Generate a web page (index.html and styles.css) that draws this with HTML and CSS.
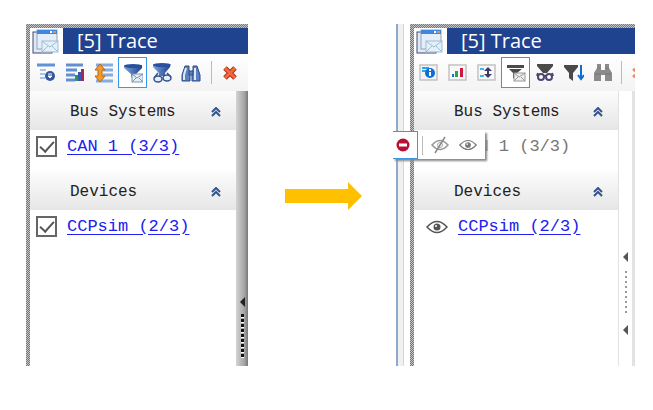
FILE: index.html
```html
<!DOCTYPE html>
<html lang="en">
<head>
    <meta charset="UTF-8">
    <meta name="viewport" content="width=device-width, initial-scale=1.0">
    <title>Trace</title>
    <link rel="stylesheet" href="styles.css">
</head>
<body>
    <svg class="defs" width="0" height="0" aria-hidden="true">
        <defs>
            <linearGradient id="blueGrad" x1="0" y1="0" x2="1" y2="0">
                <stop offset="0" stop-color="#7da4dc"/>
                <stop offset="1" stop-color="#1f438f"/>
            </linearGradient>
            <symbol id="window" viewBox="0 0 27 25">
                <rect x="1" y="3" width="19" height="21" fill="#dfe9f5" stroke="#3c4a70"/>
                <rect x="5" y="1" width="20" height="19" fill="#e3eefa" stroke="#8fa3bd"/>
                <rect x="5" y="1" width="20" height="4" fill="#3f86dc"/>
                <rect x="18" y="2" width="2" height="2" fill="#fff"/>
                <rect x="21" y="2" width="3" height="2" fill="#f08a4a"/>
                <rect x="10" y="12" width="16" height="11" fill="#e2f0fa" stroke="#a4bccd"/>
                <path d="M10 12l8 6 8-6M10 23l6-6M26 23l-6-6" fill="none" stroke="#a4bccd"/>
            </symbol>
            <symbol id="collapse" viewBox="0 0 10 10">
                <path d="M1 5l4-4 4 4M1 9l4-4 4 4" fill="none" stroke="#2f5590" stroke-width="2"/>
            </symbol>
            <symbol id="eye" viewBox="0 0 22 14">
                <path d="M1 7Q11-4 21 7Q11 18 1 7Z" fill="#fff" stroke="currentColor" stroke-width="1.5"/>
                <circle cx="11" cy="7" r="3.5" fill="currentColor"/>
                <circle cx="10" cy="6" r="1" fill="#fff"/>
            </symbol>
        </defs>
    </svg>

    <main class="compare">
        <section class="panel">
            <header class="titlebar">
                <svg class="app-icon"><use href="#window"/></svg>
                <h2>[5] Trace</h2>
            </header>
            <div class="toolbar">
                <button aria-label="Details">
                    <svg viewBox="0 0 20 20"><path d="M1 2h18" stroke="#5f92d6" stroke-width="3"/><path d="M4 7h6M4 11h5M4 15h5" stroke="#a9c4e8" stroke-width="2"/><circle cx="14" cy="13" r="5" fill="#35579f"/><path d="M12 13h4l-2 2zM12 11h4" fill="#fff" stroke="#fff"/></svg>
                </button>
                <button aria-label="Statistics">
                    <svg viewBox="0 0 20 20"><path d="M1 2h17M1 7h11M1 12h9M1 17h9" stroke="#638fd0" stroke-width="3"/><path d="M10 12h3v6h-3z" fill="#2e9a43"/><path d="M13 9h3v9h-3z" fill="#3458b4"/><path d="M16 6h3v12h-3z" fill="#a72654"/></svg>
                </button>
                <button aria-label="Expand rows">
                    <svg viewBox="0 0 20 20"><path d="M2 2h17M9 7h10M9 12h10M2 18h17" stroke="#86ace0" stroke-width="3"/><path d="M6 1l5 6H8v6h3l-5 6-5-6h3V7H1z" fill="#f59b28" stroke="#b8641a"/></svg>
                </button>
                <button class="active" aria-label="Message filter">
                    <svg viewBox="0 0 20 20"><path d="M1 2h18v3l-6 6v6l-5-3v-3L1 5z" fill="url(#blueGrad)"/><ellipse cx="10" cy="3" rx="9" ry="2" fill="#29509f"/><rect x="9" y="11" width="11" height="8" fill="#e6eff7" stroke="#7b93ae"/><path d="M9 11l5 4 6-4M9 19l4-4M20 19l-4-4" fill="none" stroke="#7b93ae"/></svg>
                </button>
                <button aria-label="View filter">
                    <svg viewBox="0 0 20 20"><path d="M1 1h17v3l-5 6v3H7v-3L1 4z" fill="url(#blueGrad)"/><ellipse cx="10" cy="2" rx="9" ry="2" fill="#29509f"/><g fill="#e6eefa" stroke="#345491" stroke-width="1.5"><ellipse cx="6" cy="16" rx="4" ry="3"/><ellipse cx="15" cy="15" rx="4" ry="3"/><path d="M2 15l4-5M19 14l-4-4" fill="none"/></g></svg>
                </button>
                <button aria-label="Find">
                    <svg viewBox="0 0 20 20"><g fill="#5b82c0" stroke="#2c4a86"><path d="M4 3h4v4l1 3v8H1v-6z"/><path d="M12 3h4l3 9v6h-8v-8l1-3z"/><path d="M8 8h4v4H8z"/></g><path d="M5 5l-2 7v5M14 5v12" stroke="#dce8f8" fill="none" stroke-width="2"/></svg>
                </button>
                <span class="divider"></span>
                <button aria-label="Clear">
                    <svg viewBox="0 0 20 20"><path d="M5 5l10 10M15 5L5 15" stroke="#a8321a" stroke-width="5"/><path d="M5 5l10 10M15 5L5 15" stroke="#f26a3c" stroke-width="3"/></svg>
                </button>
            </div>
            <div class="content">
                <div class="groups">
                    <div class="group-title">
                        <h3>Bus Systems</h3>
                        <button class="collapse" aria-label="Collapse Bus Systems"><svg><use href="#collapse"/></svg></button>
                    </div>
                    <div class="item">
                        <input type="checkbox" aria-label="CAN 1" checked>
                        <a href="#can">CAN 1 (3/3)</a>
                    </div>
                    <div class="group-title">
                        <h3>Devices</h3>
                        <button class="collapse" aria-label="Collapse Devices"><svg><use href="#collapse"/></svg></button>
                    </div>
                    <div class="item">
                        <input type="checkbox" aria-label="CCPsim" checked>
                        <a href="#ccpsim">CCPsim (2/3)</a>
                    </div>
                </div>
                <div class="splitter">
                    <span class="arrow"></span>
                    <span class="grip"></span>
                </div>
            </div>
        </section>

        <div class="becomes">
            <svg viewBox="0 0 77 28"><path d="M0 7h63V0l14 14-14 14v-7H0z" fill="#ffc000"/></svg>
        </div>

        <div class="docked">
            <div class="edge"></div>
            <section class="panel new">
                <header class="titlebar">
                    <svg class="app-icon"><use href="#window"/></svg>
                    <h2>[5] Trace</h2>
                </header>
                <div class="toolbar">
                    <button aria-label="Details">
                        <svg viewBox="0 0 20 20"><rect x="1" y="2" width="17" height="15" fill="#f4f4f4" stroke="#c2c2c2" stroke-width="1.5"/><path d="M3 5h7M3 8h4" stroke="#2ba5ee" stroke-width="2"/><circle cx="11" cy="10" r="5" fill="#0b6fd3"/><path d="M11 9v4M11 6v2" stroke="#fff" stroke-width="2"/></svg>
                    </button>
                    <button aria-label="Statistics">
                        <svg viewBox="0 0 20 20"><rect x="1" y="2" width="17" height="15" fill="#f8f8f8" stroke="#c2c2c2" stroke-width="1.5"/><path d="M4 11h2v3H4z" fill="#1672c4"/><path d="M7 8h3v6H7z" fill="#21a84a"/><path d="M12 5h3v9h-3z" fill="#cf1744"/></svg>
                    </button>
                    <button aria-label="Expand rows">
                        <svg viewBox="0 0 20 20"><rect x="1" y="2" width="17" height="15" fill="#f8f8f8" stroke="#c2c2c2" stroke-width="1.5"/><path d="M3 6h4M3 13h4" stroke="#43b3f0" stroke-width="2"/><path d="M11 4l4 4h-3v3h3l-4 4-4-4h3V8H7z" fill="#3b3b68"/></svg>
                    </button>
                    <button class="active" aria-label="Message filter">
                        <svg viewBox="0 0 20 20"><path d="M1 2h17v3H1zM3 6h13l-5 4v7l-4-2v-5z" fill="#4a4a4a"/><rect x="8" y="10" width="11" height="8" fill="#eee" stroke="#999"/><path d="M8 10l5 4 6-4M8 18l4-4M19 18l-4-4" fill="none" stroke="#999"/></svg>
                    </button>
                    <button aria-label="View filter">
                        <svg viewBox="0 0 20 20"><path d="M2 1h16v2l-6 7H8L2 3z" fill="#4a4a4a"/><g fill="#fff" stroke="#4b4773" stroke-width="2"><circle cx="6" cy="14" r="3"/><circle cx="14" cy="14" r="3"/><path d="M9 13h2M2 13l1-3M18 13l-1-3"/></g></svg>
                    </button>
                    <button aria-label="Sort">
                        <svg viewBox="0 0 20 20"><path d="M0 2h14v2L9 10v8l-4-3v-5L0 4z" fill="#4a4a4a"/><path d="M17 2v13M14 12l3 4 3-4" fill="none" stroke="#0b6fd3" stroke-width="2"/></svg>
                    </button>
                    <button aria-label="Find">
                        <svg viewBox="0 0 20 20"><path d="M4 1h4v6h4V1h4v4l3 5v8h-7v-6H8v6H1v-8l3-5z" fill="#8b8b8b"/><path d="M4 5h4M12 5h4M2 11h6M12 11h6" stroke="#777"/></svg>
                    </button>
                    <span class="divider"></span>
                    <button class="cut" aria-label="Clear">
                        <svg viewBox="0 0 20 20"><path d="M1 6l12 8M13 6L1 14" stroke="#f08a6a" stroke-width="3"/></svg>
                    </button>
                </div>
                <div class="content">
                    <div class="groups">
                        <div class="group-title">
                            <h3>Bus Systems</h3>
                            <button class="collapse" aria-label="Collapse Bus Systems"><svg><use href="#collapse"/></svg></button>
                        </div>
                        <div class="item">
                            <span class="state"></span>
                            <span class="muted">CAN 1 (3/3)</span>
                            <div class="popup">
                                <button class="chosen" aria-label="Exclude">
                                    <svg viewBox="0 0 14 14"><circle cx="7" cy="7" r="6.5" fill="#b80f35"/><path d="M3 7h8" stroke="#fff" stroke-width="3"/></svg>
                                </button>
                                <span class="line"></span>
                                <button aria-label="Hide">
                                    <svg viewBox="0 0 18 18"><path d="M1 9Q9 0 17 9Q9 18 1 9Z" fill="none" stroke="#999" stroke-width="1.5"/><circle cx="9" cy="9" r="2.5" fill="none" stroke="#aaa"/><path d="M4 17L14 1" stroke="#888" stroke-width="1.5"/></svg>
                                </button>
                                <button class="show" aria-label="Show">
                                    <svg><use href="#eye"/></svg>
                                </button>
                            </div>
                        </div>
                        <div class="group-title">
                            <h3>Devices</h3>
                            <button class="collapse" aria-label="Collapse Devices"><svg><use href="#collapse"/></svg></button>
                        </div>
                        <div class="item">
                            <button class="state" aria-label="CCPsim shown"><svg><use href="#eye"/></svg></button>
                            <a href="#ccpsim">CCPsim (2/3)</a>
                        </div>
                    </div>
                    <div class="splitter">
                        <span class="arrow"></span>
                        <span class="grip"></span>
                        <span class="arrow"></span>
                    </div>
                </div>
            </section>
        </div>
    </main>
</body>
</html>
```

FILE: styles.css
```css
* {
    box-sizing: border-box;
}
body {
    margin: 0;
    background: #fff;
    font-family: "Liberation Mono", monospace;
    color: #222;
}
.defs {
    position: absolute;
}
button {
    padding: 0;
    border: 0;
    background: none;
}
svg {
    display: block;
}
.compare {
    display: grid;
    grid-template-columns: minmax(0, 222fr) minmax(0, 148fr) minmax(0, 239fr);
    padding: 24px 18px 44px 26px;
}
.panel {
    display: flex;
    flex-direction: column;
    flex: 1;
    min-width: 0;
    min-height: 342px;
    padding: 4px 0 0 4px;
    background: repeating-conic-gradient(#777 0 25%, #c4c4c4 0 50%) 0 0 / 2px 2px;
}

/* title bar */
.titlebar {
    display: flex;
    height: 26px;
    background: #fff;
}
.app-icon {
    width: 27px;
    height: 25px;
    margin: 1px 4px 0 2px;
}
.titlebar h2 {
    flex: 1;
    margin: 0;
    padding-left: 14px;
    background: #1f438f;
    color: #fff;
    font: 20px/26px "Open Sans", sans-serif;
}

/* toolbar */
.toolbar {
    display: flex;
    align-items: center;
    height: 37px;
    padding-left: 1px;
    background: linear-gradient(#fff, #f3f3f3);
    overflow: hidden;
}
.toolbar button {
    display: flex;
    flex: none;
    align-items: center;
    justify-content: center;
    width: 29px;
    height: 31px;
}
.toolbar .active {
    border: 1px solid #3b97e3;
    background: #fff;
}
.toolbar svg {
    flex: none;
    width: 20px;
    height: 20px;
}
.divider {
    flex: none;
    width: 1px;
    height: 23px;
    margin: 0 3px 0 6px;
    background: #bbb;
}

/* groups */
.content {
    display: flex;
    flex: 1;
}
.groups {
    flex: 1;
    min-width: 0;
    background: #fff;
}
.group-title {
    display: flex;
    align-items: center;
    justify-content: space-between;
    height: 39px;
    padding: 3px 15px 0 40px;
    background: linear-gradient(#fcfcfc, #e6e6e6);
}
.group-title h3 {
    margin: 0;
    font-size: 16px;
    font-weight: normal;
    white-space: nowrap;
}
.collapse svg {
    width: 10px;
    height: 10px;
}
.item {
    position: relative;
    display: flex;
    align-items: center;
    gap: 10px;
    height: 33px;
    margin-bottom: 8px;
    padding-left: 6px;
    font-size: 17px;
    white-space: nowrap;
}
.item a {
    color: #2020f0;
    text-underline-offset: 3px;
}
.item input {
    display: flex;
    flex: none;
    justify-content: center;
    appearance: none;
    width: 21px;
    height: 21px;
    margin: 0;
    border: 2px solid #666;
    background: #fff;
}
.item input:checked::after {
    content: "";
    width: 6px;
    height: 12px;
    border: solid #555;
    border-width: 0 2px 2px 0;
    transform: rotate(42deg);
}
.muted {
    color: #777;
}

/* splitter */
.splitter {
    display: flex;
    flex: none;
    flex-direction: column;
    align-items: center;
    width: 12px;
    padding-top: 206px;
    background: linear-gradient(90deg, #d4d4d4, #a4a4a4 70%, #777);
}
.arrow {
    border: 5px solid transparent;
    border-left-width: 0;
    border-right-color: #222;
}
.grip {
    width: 3px;
    height: 45px;
    margin-top: 7px;
    background: repeating-linear-gradient(#111 0 3px, #fff 3px 4px, transparent 4px 5px);
}

/* new look */
.docked {
    display: flex;
}
.edge {
    flex: none;
    width: 8px;
    margin-right: 6px;
    border-left: 2px solid #8eaacb;
    border-right: 1px solid #d6d6d6;
    background: #f0f0f0;
}
.new .toolbar {
    padding: 0;
}
.new .divider {
    margin: 0 10px 0 4px;
}
.new .cut {
    justify-content: flex-start;
}
.new .state {
    flex: none;
    width: 22px;
    color: #555;
}
.new .item {
    padding-left: 12px;
}
.state svg {
    width: 22px;
    height: 14px;
}
.new .splitter {
    width: 17px;
    padding-top: 161px;
    border: solid #e2e2e2;
    border-width: 0 3px 0 1px;
    background: #fff;
}
.new .arrow {
    border-right-color: #555;
}
.new .grip {
    width: 2px;
    height: 43px;
    margin: 9px 0 11px;
    background: repeating-linear-gradient(#999 0 2px, transparent 2px 5px);
}
.popup {
    position: absolute;
    top: 1px;
    left: -21px;
    display: flex;
    align-items: center;
    height: 28px;
    background: #fff;
    box-shadow: 2px 2px 2px #888;
}
.popup .chosen {
    display: flex;
    align-items: center;
    justify-content: center;
    width: 25px;
    height: 28px;
    border: 1px solid #3b97e3;
    border-left: 0;
    padding-right: 4px;
}
.popup svg {
    width: 18px;
    height: 18px;
}
.popup .chosen svg {
    width: 14px;
    height: 14px;
}
.popup .line {
    width: 1px;
    height: 19px;
    margin: 0 8px 0 4px;
    background: #bbb;
}
.popup .show {
    margin: 0 8px 0 10px;
    color: #777;
}

.becomes {
    display: flex;
    justify-content: center;
    padding: 158px 0 0 2px;
}
.becomes svg {
    width: 77px;
    height: 28px;
}
```
